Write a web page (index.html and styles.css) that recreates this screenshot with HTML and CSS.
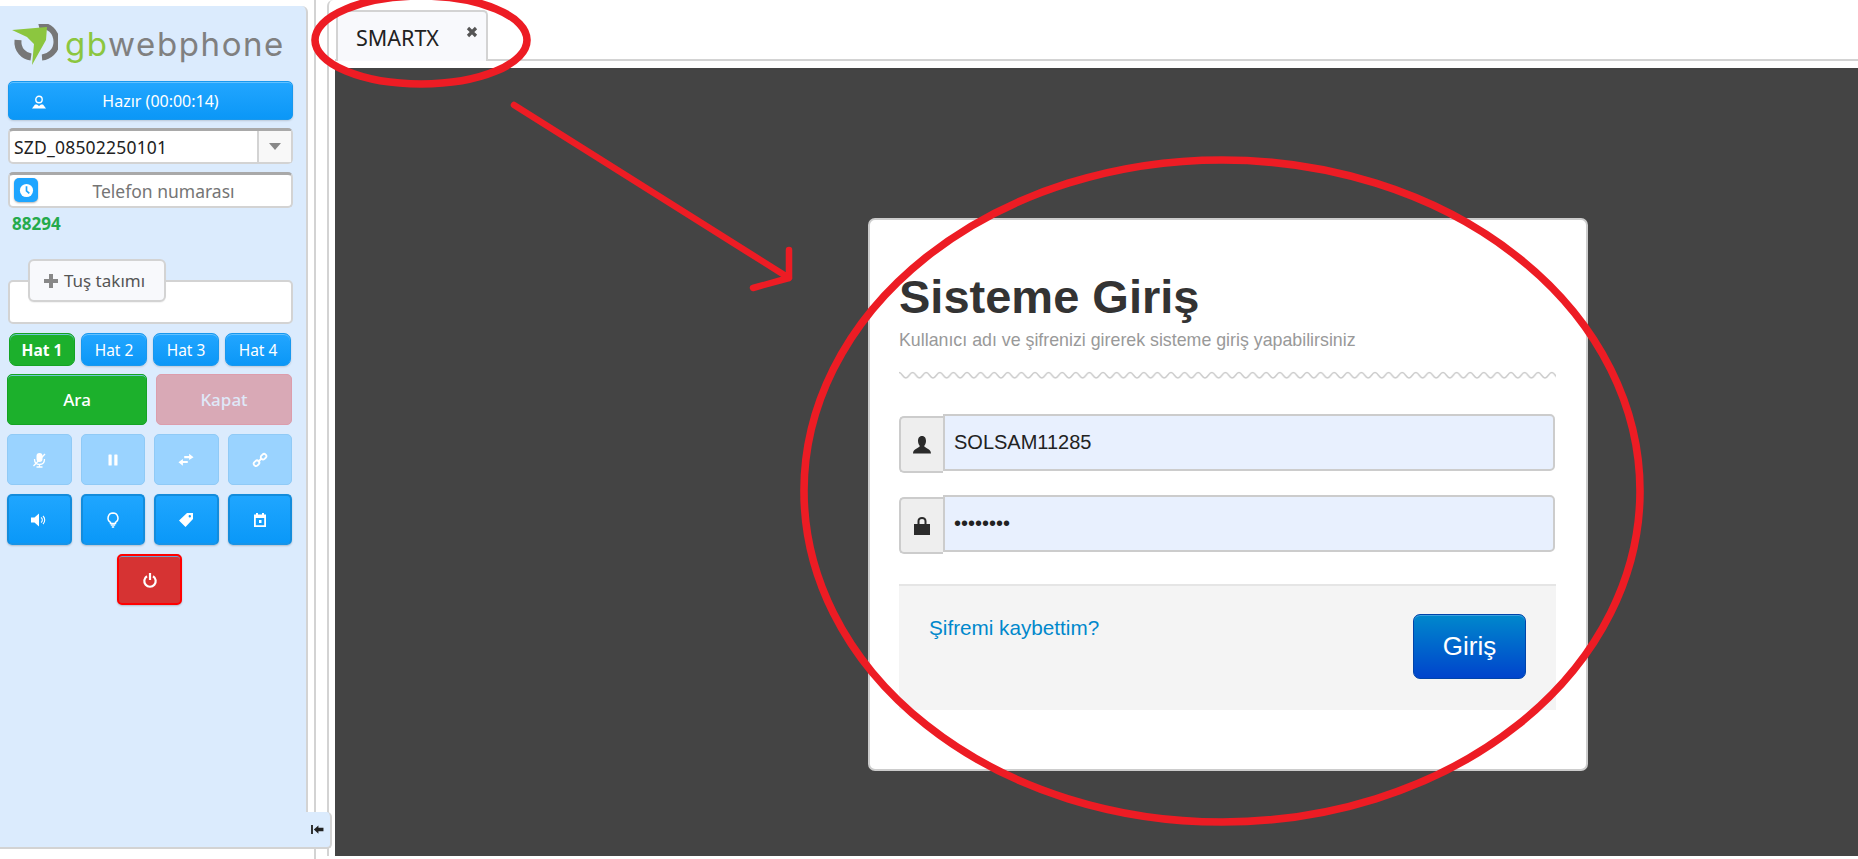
FILE: index.html
```html
<!DOCTYPE html>
<html lang="tr">
<head>
<meta charset="utf-8">
<title>gbwebphone</title>
<link rel="stylesheet" href="styles.css">
</head>
<body>
<div class="app">
  <aside class="sidebar">
    <div class="logo">
      <svg class="logo-mark" viewBox="0 0 46 42"><path d="M27 2.500C37 0 44.500 8 44.500 18C44.500 27 37 33 30 33.500" fill="none" stroke="#777" stroke-width="6"/><path d="M6 16C5 26 12 32 19 33" fill="none" stroke="#777" stroke-width="7"/><polygon points="0,6 35,3 34,16 20,41 22,20 15,13" fill="#8cc63f"/></svg>
      <span class="logo-text"><span class="logo-gb">gb</span>webphone</span>
    </div>
    <button class="btn btn-blue status">
      <svg class="status-icon" viewBox="0 0 16 14"><circle cx="8" cy="4.500" r="3.200" fill="none" stroke="#fff" stroke-width="1.400"/><path d="M1 13.500L4 9.500H6L8 11L10 9.500H12L15 13.500Z" fill="#fff"/></svg>
      <span>Hazır (00:00:14)</span>
    </button>
    <div class="select-box">
      <span class="select-value">SZD_08502250101</span>
      <span class="select-arrow"><i class="caret"></i></span>
    </div>
    <div class="phone-box">
      <span class="clock-btn"><svg viewBox="0 0 16 16" class="clock-icon"><circle cx="8" cy="8" r="7" fill="#fff"/><path d="M8 3.500V8.300L11 11" fill="none" stroke="#1ea5ff" stroke-width="1.800"/></svg></span>
      <span class="phone-placeholder">Telefon numarası</span>
    </div>
    <div class="ext">88294</div>
    <div class="keypad">
      <div class="keypad-tab">
        <svg class="plus" viewBox="0 0 14 14"><path d="M5 0H9V5H14V9H9V14H5V9H0V5H5Z" fill="#888"/></svg>
        <span>Tuş takımı</span>
      </div>
    </div>
    <div class="lines">
      <button class="btn btn-green line active">Hat 1</button>
      <button class="btn btn-blue line">Hat 2</button>
      <button class="btn btn-blue line">Hat 3</button>
      <button class="btn btn-blue line">Hat 4</button>
    </div>
    <div class="calls">
      <button class="btn btn-green call">Ara</button>
      <button class="btn btn-pink call end">Kapat</button>
    </div>
    <div class="tools">
      <button class="btn tool tool-off"><svg viewBox="0 0 16 16"><rect x="5.500" y="1" width="6" height="9" rx="3" fill="#fff"/><path d="M3.500 7C3.500 11 6 12.500 8.500 12.500S13.500 11 13.500 7M8.500 12.500V15M5.500 15H11.500" fill="none" stroke="#fff" stroke-width="1.300"/><path d="M2.500 14L14 2" stroke="#fff" stroke-width="1.300"/></svg></button>
      <button class="btn tool tool-off"><svg viewBox="0 0 16 16"><rect x="3.500" y="2.500" width="3.200" height="11" rx=".6" fill="#fff"/><rect x="9.300" y="2.500" width="3.200" height="11" rx=".6" fill="#fff"/></svg></button>
      <button class="btn tool tool-off"><svg viewBox="0 0 18 16"><path d="M7 3.500H12.500V1L17.500 5L12.500 8V6H7Z M11 9H5.500V7L.5 10.500L5.500 14.500V11.500H11Z" fill="#fff"/></svg></button>
      <button class="btn tool tool-off"><svg viewBox="0 0 16 16"><g fill="none" stroke="#fff" stroke-width="1.800"><rect x="1.500" y="9" width="6" height="4.500" rx="2.200" transform="rotate(-45 4.500 11.200)"/><rect x="8.500" y="2.500" width="6" height="4.500" rx="2.200" transform="rotate(-45 11.500 4.700)"/><path d="M6 10L10 6"/></g></svg></button>
    </div>
    <div class="tools">
      <button class="btn tool tool-on"><svg viewBox="0 0 16 16"><path d="M0 5.500H3.500L8 1.500V14.500L3.500 10.500H0Z" fill="#fff"/><path d="M10 5.500A3 3 0 0 1 10 10.500M12 4A5.500 5.500 0 0 1 12 12" fill="none" stroke="#fff" stroke-width="1.100"/></svg></button>
      <button class="btn tool tool-on"><svg viewBox="0 0 16 16"><path d="M8 1A5 5 0 0 0 5.500 10.300V11.500H10.500V10.300A5 5 0 0 0 8 1Z" fill="none" stroke="#fff" stroke-width="1.500"/><path d="M5.800 13H10.200M6.800 15H9.200" stroke="#fff" stroke-width="1.500"/></svg></button>
      <button class="btn tool tool-on"><svg viewBox="0 0 16 16"><path fill-rule="evenodd" d="M9 1H15V7L7.500 15L1 8.500ZM11.800 3A1.200 1.200 0 1 0 11.800 5.400A1.200 1.200 0 1 0 11.800 3Z" fill="#fff"/></svg></button>
      <button class="btn tool tool-on"><svg viewBox="0 0 16 16"><path fill-rule="evenodd" d="M2 2.500H4V1H6V2.500H10V1H12V2.500H14V15H2ZM3.800 6V13.200H12.200V6ZM7 8H9.500V11H7Z" fill="#fff"/></svg></button>
    </div>
    <div class="power-row">
      <button class="btn tool power"><svg viewBox="0 0 16 16"><path d="M5 4.200A5.700 5.700 0 1 0 11 4.200" fill="none" stroke="#fff" stroke-width="2.200"/><path d="M8 1V8" stroke="#fff" stroke-width="2.200"/></svg></button>
    </div>
  </aside>
  <div class="gutter"></div>
  <main class="main">
    <nav class="tabbar">
      <div class="tab">
        <span>SMARTX</span>
        <svg class="tab-close" viewBox="0 0 12 12"><path d="M2 2L10 10M10 2L2 10" stroke="#555" stroke-width="3.200"/></svg>
      </div>
    </nav>
    <section class="stage">
      <form class="card">
        <h1 class="card-title">Sisteme Giriş</h1>
        <p class="card-sub">Kullanıcı adı ve şifrenizi girerek sisteme giriş yapabilirsiniz</p>
        <svg class="wave" width="657" height="9"><defs><pattern id="wv" width="13.600" height="9" patternUnits="userSpaceOnUse"><path d="M0 1.500C3 1.500 3.800 7 6.800 7S10.600 1.500 13.600 1.500" fill="none" stroke="#ccc" stroke-width="1.500"/></pattern></defs><rect width="657" height="9" fill="url(#wv)"/></svg>
        <div class="field">
          <span class="addon"><svg viewBox="0 0 20 20"><path d="M10 1C7 1 6 3.500 6 6C6 8.500 7.300 10.300 7.800 11C7.500 13 1 13.500 1 18.500H19C19 13.500 12.500 13 12.200 11C12.700 10.300 14 8.500 14 6C14 3.500 13 1 10 1Z" fill="#2b2b2b"/></svg></span>
          <input class="text-input" type="text" value="SOLSAM11285">
        </div>
        <div class="field">
          <span class="addon"><svg viewBox="0 0 20 20"><path fill-rule="evenodd" d="M2 8H5.500V5C5.500 2.500 7.500 1 10 1S14.500 2.500 14.500 5V8H18V19H2ZM7.500 8H12.500V5C12.500 3.800 11.500 3 10 3S7.500 3.800 7.500 5Z" fill="#2b2b2b"/></svg></span>
          <input class="text-input" type="password" value="12345678">
        </div>
        <div class="card-foot">
          <a class="forgot" href="#">Şifremi kaybettim?</a>
          <button class="submit" type="button">Giriş</button>
        </div>
      </form>
    </section>
  </main>
  <button class="collapse"><svg viewBox="0 0 14 12"><path d="M1 1V11" stroke="#222" stroke-width="2"/><path d="M3 6L8 1.500V4.200H13.500V7.800H8V10.500Z" fill="#222"/></svg></button>
  <svg class="marks" viewBox="0 0 1858 859">
    <g fill="none" stroke="#ed1c24" stroke-width="7.600" stroke-linecap="round" stroke-linejoin="round">
      <ellipse cx="421" cy="40" rx="106" ry="44"/>
      <path d="M514 105L789 278M789 250V278L753 288" stroke-width="6.500"/>
      <ellipse cx="1222" cy="491" rx="418" ry="331"/>
    </g>
  </svg>
</div>
</body>
</html>
```
FILE: styles.css
```css
* { box-sizing: border-box; }
html, body { margin: 0; height: 100%; background: #fff; overflow: hidden; }
body { font-family: "Noto Sans", "Roboto", sans-serif; }
button { font-family: inherit; padding: 0; cursor: pointer; }
.app { position: relative; display: flex; width: 1858px; height: 859px; }

/* sidebar */
.sidebar {
  width: 308px; height: 843px; margin-top: 6px; padding: 18px 13px 0 7px;
  background: #dbebfd; border-right: 2px solid #d3d3d3; border-bottom: 2px solid #d3d3d3;
  border-top-right-radius: 6px; flex: none;
}
.logo { display: flex; align-items: center; height: 41px; margin-left: 5px; gap: 7px; }
.logo-mark { width: 46px; height: 42px; flex: none; }
.logo-text { font-family: "Inter", sans-serif; font-weight: 400; font-size: 33px; line-height: 41px; letter-spacing: 1.600px; color: #808080; }
.logo-gb { color: #8cc63f; }

.btn { border-radius: 5px; color: #fff; border: 1px solid transparent; display: flex; align-items: center; justify-content: center; }
.btn-blue { background: linear-gradient(#22a6ff, #0b97f7); border-color: #1898ee; box-shadow: inset 0 1px 0 #62c1ff, 0 1px 2px rgba(0,0,0,.15); }
.btn-green { background: #1cb02c; border: 1px solid #14a324; box-shadow: inset 0 1px 0 #6fc7d5; }
.btn-pink { background: #d9a9b6; border: 1px solid #dc9dac; color: #dfe8f8; }

.status { position: relative; width: 285px; height: 39px; margin: 16px 0 0 1px; padding-left: 20px; font-size: 16px; }
.status-icon { position: absolute; left: 22px; top: 13px; width: 16px; height: 14px; }

.select-box, .phone-box { width: 285px; margin-left: 1px; background: #fff; border: 2px solid #d3d3d3; border-top: 3px solid #a9a9a9; border-radius: 5px; display: flex; align-items: center; }
.select-box { height: 36px; margin-top: 8px; }
.select-value { flex: 1; padding-left: 4px; font-size: 17.500px; letter-spacing: .2px; color: #222; }
.select-arrow { width: 34px; height: 100%; background: #f8f8f8; border-left: 2px solid #d3d3d3; display: flex; align-items: center; justify-content: center; }
.caret { width: 0; height: 0; border: 6px solid transparent; border-top: 7px solid #888; border-bottom: 0; }

.phone-box { position: relative; height: 36px; margin-top: 8px; padding-left: 26px; justify-content: center; }
.clock-btn { position: absolute; left: 4px; top: 3px; width: 24px; height: 24px; border-radius: 5px; background: #1ea5ff; display: flex; align-items: center; justify-content: center; box-shadow: 0 1px 2px rgba(0,0,0,.3); }
.clock-icon { width: 15px; height: 15px; }
.phone-placeholder { font-size: 17.500px; color: #757575; }

.ext { margin: 6px 0 0 5px; height: 19px; line-height: 19px; font-size: 17px; font-weight: 700; color: #25aa4b; }

.keypad { position: relative; width: 285px; height: 44px; margin: 47px 0 0 1px; background: #fff; border: 2px solid #d3d3d3; border-radius: 5px; }
.keypad-tab { position: absolute; left: 18px; top: -23px; width: 138px; height: 43px; padding-right: 5px; background: #f8f9fc; border: 2px solid #d3d3d3; border-radius: 6px; display: flex; align-items: center; justify-content: center; gap: 6px; font-size: 17px; color: #555; box-shadow: 0 1px 1px rgba(0,0,0,.05); }
.plus { width: 14px; height: 14px; }

.lines { display: flex; gap: 6px; width: 282px; margin: 9px 0 0 2px; }
.line { flex: 1; height: 33px; border-radius: 7px; font-size: 15.500px; }
.line.active { font-weight: 700; }
.calls { display: flex; gap: 9px; margin-top: 8px; width: 285px; }
.call { height: 51px; font-size: 17px; font-weight: 500; border-radius: 5px; width: 140px; flex: none; }
.call.end { width: 136px; }

.tools { display: flex; gap: 9px; margin-top: 9px; width: 285px; }
.tool { flex: 1; height: 51px; border-radius: 5px; }
.tool svg { width: 16px; height: 16px; }
.tool-off { background: #9ad3ff; border-color: #90caf6; }
.tool-on { background: linear-gradient(#1fa6ff, #0a98f8); border: 2px solid #138cdc; border-bottom-color: #1794e8; box-shadow: 0 1px 2px rgba(0,0,0,.2); }
.power-row { display: flex; justify-content: center; width: 285px; margin-top: 9px; }
.power { flex: none; width: 65px; background: #d63333; border: 2px solid #f00; box-shadow: inset 0 1px 0 #6fa0d0, 0 1px 2px rgba(0,0,0,.2); }

/* gutter */
.gutter { width: 13px; flex: none; margin-left: 6px; border-left: 2px solid #d3d3d3; }
.collapse { position: absolute; left: 305px; top: 812px; width: 27px; height: 37px; background: #dbebfd; border: 0; border-right: 2px solid #d3d3d3; border-bottom: 2px solid #d3d3d3; border-radius: 0 5px 5px 0; display: flex; align-items: center; justify-content: center; }
.collapse svg { width: 13px; height: 11px; }

/* main */
.main { flex: 1; display: flex; flex-direction: column; height: 856px; padding-left: 6px; border-left: 2px solid #d3d3d3; border-top-left-radius: 6px; }
.tabbar { height: 61px; padding-top: 10px; border-bottom: 2px solid #d3d3d3; flex: none; }
.tab { position: relative; width: 152px; height: 51px; margin-left: 1px; padding: 14px 0 0 18px; background: #f8f9fc; border: 2px solid #d3d3d3; border-bottom: 0; border-radius: 5px 5px 0 0; font-size: 21.500px; line-height: 24px; color: #222; }
.tab-close { position: absolute; right: 8px; top: 14px; width: 12px; height: 12px; }
.stage { flex: 1; margin-top: 7px; background: #444; padding: 150px 0 0 533px; }

/* login card */
.card { width: 720px; height: 553px; padding: 48px 30px 0 29px; background: #fff; border: 2px solid #ccc; border-radius: 7px; font-family: "Liberation Sans", Arial, sans-serif; }
.card-title { margin: 0; font-size: 47px; line-height: 58px; font-weight: 700; color: #333; }
.card-sub { margin: 2px 0 0; font-size: 17.800px; line-height: 24px; color: #999; }
.wave { display: block; margin-top: 19px; }
.field { display: flex; height: 59px; width: 656px; margin-top: 34px; }
.field + .field { margin-top: 22px; }
.addon { width: 44px; height: 57px; margin-top: 2px; flex: none; background: #eee; border: 2px solid #ccc; border-right: 0; border-radius: 5px 0 0 5px; display: flex; align-items: center; justify-content: center; }
.addon svg { width: 20px; height: 20px; }
.text-input { width: 612px; height: 57px; padding: 0 9px; background: #e8f0fe; border: 2px solid #ccc; border-radius: 0 5px 5px 0; font-family: "Liberation Sans", Arial, sans-serif; font-size: 20px; color: #222; outline: 0; }
.card-foot { display: flex; justify-content: space-between; align-items: flex-start; height: 126px; width: 657px; margin-top: 30px; padding: 29px 30px 0 30px; background: #f4f4f4; border-top: 2px solid #e5e5e5; }
.forgot { font-size: 20.700px; line-height: 26px; color: #0088cc; text-decoration: none; }
.submit { width: 113px; height: 65px; margin-top: -1px; border: 1px solid #0044aa; border-radius: 7px; background: linear-gradient(#0088cc, #0044cc); box-shadow: inset 0 1px 0 #3aa0dd; color: #fff; font-family: "Liberation Sans", Arial, sans-serif; font-size: 26px; }

/* red annotation drawn over the screenshot */
.marks { position: absolute; left: 0; top: 0; width: 1858px; height: 859px; pointer-events: none; }
```
